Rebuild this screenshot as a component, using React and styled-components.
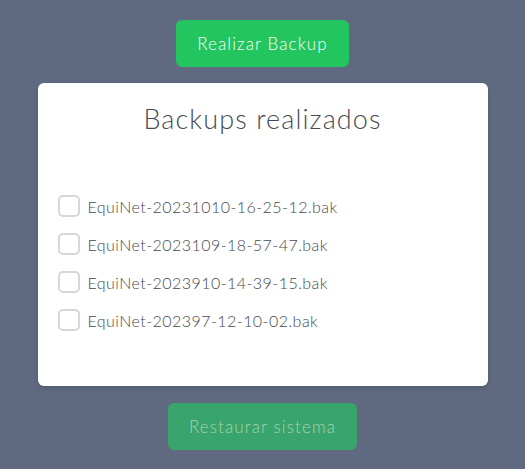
import React from "react";
import styled, { createGlobalStyle } from "styled-components";

const GlobalStyle = createGlobalStyle`
  html, body {
    margin: 0;
    padding: 0;
    background-color: #5f6a80;
    font-family: "Lato", "Open Sans", sans-serif;
  }
`;

const backups = [
  "EquiNet-20231010-16-25-12.bak",
  "EquiNet-2023109-18-57-47.bak",
  "EquiNet-2023910-14-39-15.bak",
  "EquiNet-202397-12-10-02.bak",
];

function App() {
  return (
    <Page>
      <GlobalStyle />
      <ActionButton>Realizar Backup</ActionButton>
      <Card>
        <Title>Backups realizados</Title>
        <List>
          {backups.map((name) => (
            <Row key={name}>
              <Check type="checkbox" />
              <FileName>{name}</FileName>
            </Row>
          ))}
        </List>
      </Card>
      <ActionButton $disabled disabled>
        Restaurar sistema
      </ActionButton>
    </Page>
  );
}

const Page = styled.div`
  display: flex;
  flex-direction: column;
  align-items: center;
  gap: 16px;
  padding-top: 20px;
  min-height: 100vh;
  box-sizing: border-box;
`;

const ActionButton = styled.button`
  height: 47px;
  padding: 0 21px;
  border: none;
  border-radius: 6px;
  font-family: "Lato", sans-serif;
  font-weight: 300;
  font-size: 17px;
  letter-spacing: 1.1px;
  background-color: ${(p) => (p.$disabled ? "#39a46b" : "#22c55e")};
  color: ${(p) => (p.$disabled ? "#a3d3b4" : "#ffffff")};
  cursor: ${(p) => (p.$disabled ? "default" : "pointer")};
`;

const Card = styled.div`
  width: 450px;
  box-sizing: border-box;
  padding: 20px 20px 47px;
  background-color: #fff;
  border-radius: 6px;
  box-shadow: 0 2px 4px rgba(0, 0, 0, 0.15);
  margin-bottom: 1px;
`;

const Title = styled.h2`
  margin: 0;
  height: 32px;
  line-height: 32px;
  text-align: center;
  font-size: 27px;
  font-weight: 300;
  letter-spacing: 1.1px;
  color: #464b54;
`;

const List = styled.div`
  display: flex;
  flex-direction: column;
  margin-top: 52px;
`;

const Row = styled.label`
  display: flex;
  align-items: center;
  gap: 8px;
  height: 38px;
`;

const Check = styled.input`
  appearance: none;
  margin: 0;
  width: 22px;
  height: 22px;
  border: 2px solid #d4d7dc;
  border-radius: 5px;
  box-sizing: border-box;
  background: #fff;
`;

const FileName = styled.span`
  font-size: 16px;
  font-weight: 300;
  letter-spacing: 0.45px;
  color: #45494f;
`;

export default App;
